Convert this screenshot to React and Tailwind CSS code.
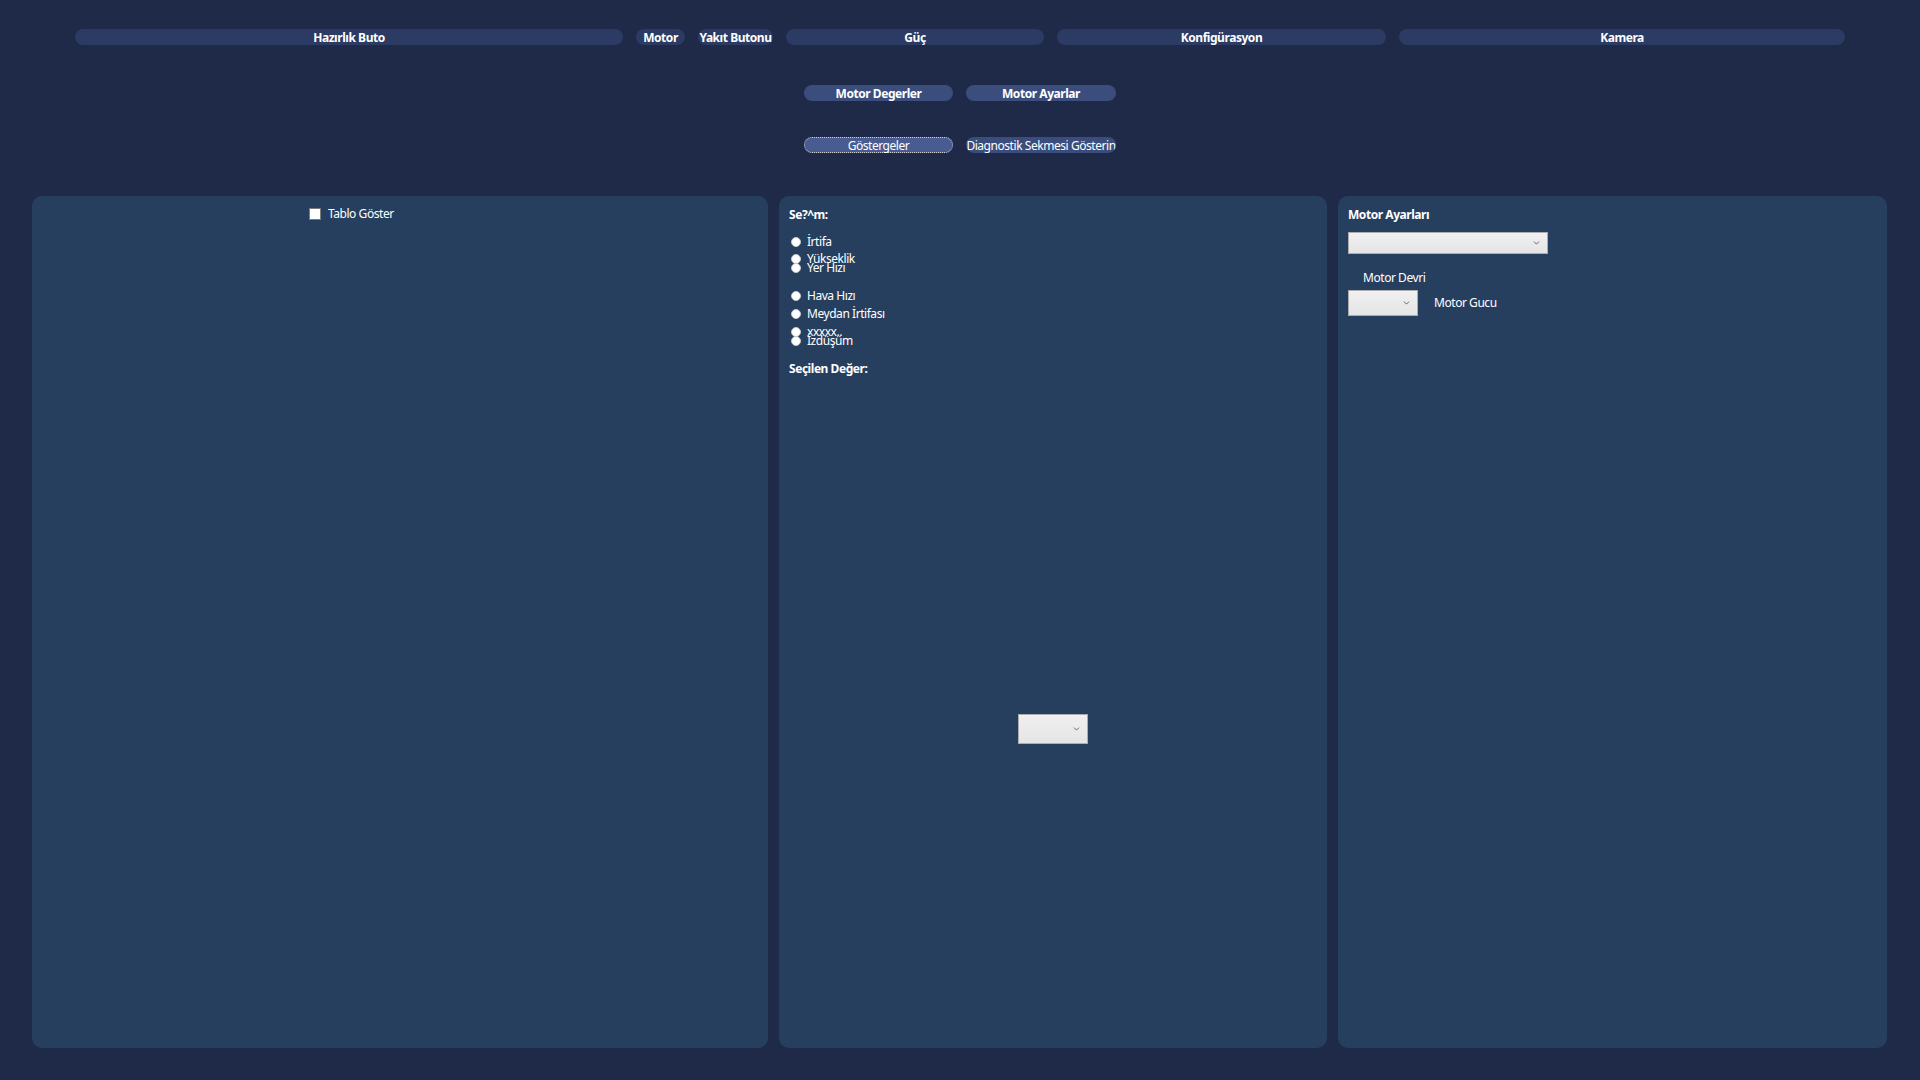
import { ChevronDown } from 'lucide-react';

const font = { fontFamily: '"Segoe UI", "Noto Sans", "Open Sans", sans-serif' };

function TopButton({ label, width }) {
  return (
    <button className={`h-4 rounded-full bg-[#2b3b63] text-white text-[12px] font-bold leading-[17px] whitespace-nowrap ${width}`}>
      {label}
    </button>
  );
}

function Select({ className }) {
  return (
    <div className={`relative border border-[#acacac] bg-gradient-to-b from-[#f0f0f0] to-[#e5e5e5] ${className}`}>
      <ChevronDown size={9} strokeWidth={2.5} className="absolute right-[6px] top-1/2 -translate-y-1/2 text-[#606060]" />
    </div>
  );
}

function Radio({ label, className = '' }) {
  return (
    <div className={`flex h-4 items-center gap-[6px] ${className}`}>
      <span className="h-[10px] w-[10px] rounded-full bg-white border border-[#c8c8c8]" />
      <span className="text-[12px] leading-4 text-white">{label}</span>
    </div>
  );
}

export default function App() {
  return (
    <div className="h-[1080px] w-[1920px] bg-[#1f2a48] overflow-hidden tracking-[-0.45px]" style={font}>
      {/* fila superior */}
      <div className="flex gap-[13px] pt-[29px] pl-[75px]">
        <TopButton label="Hazırlık Buto" width="w-[548px]" />
        <TopButton label="Motor" width="w-[49px]" />
        <TopButton label="Yakıt Butonu" width="w-[75px]" />
        <TopButton label="Güç" width="w-[258px]" />
        <TopButton label="Konfigürasyon" width="w-[329px]" />
        <TopButton label="Kamera" width="w-[446px]" />
      </div>

      <div className="flex gap-[13px] pt-[40px] pl-[804px]">
        <button className="h-4 w-[149px] rounded-full bg-[#3a4d7c] text-white text-[12px] font-bold leading-[17px]">Motor Degerler</button>
        <button className="h-4 w-[150px] rounded-full bg-[#3a4d7c] text-white text-[12px] font-bold leading-[17px]">Motor Ayarlar</button>
      </div>

      <div className="flex gap-[13px] pt-[36px] pl-[804px]">
        <button className="h-4 w-[149px] rounded-full bg-[#485c92] border border-dotted border-[#d0d0d0] text-white text-[12px] leading-[15px]">Göstergeler</button>
        <button className="h-4 w-[150px] rounded-full bg-[#3a4d7c] text-white text-[12px] leading-[17px] whitespace-nowrap overflow-hidden">Diagnostik Sekmesi Gösterin</button>
      </div>

      {/* paneles */}
      <div className="flex gap-[11px] pt-[43px] pl-[32px]">
        <div className="h-[852px] w-[736px] rounded-[10px] bg-[#273f5f] pt-[10px] pl-[277px]">
          <label className="flex items-center gap-[7px] text-[12px] leading-4 text-white">
            <span className="h-3 w-3 bg-white border border-[#7a7a7a]" />
            Tablo Göster
          </label>
        </div>

        <div className="h-[852px] w-[548px] rounded-[10px] bg-[#273f5f] pt-[11px] pl-[10px]">
          <div className="text-[12px] font-bold leading-4 text-white">Se?^m:</div>
          <Radio label="İrtifa" className="mt-[11px] pl-[2px]" />
          <Radio label="Yükseklik" className="mt-[1px] pl-[2px]" />
          <Radio label="Yer Hızı" className="-mt-[7px] pl-[2px]" />
          <Radio label="Hava Hızı" className="mt-[12px] pl-[2px]" />
          <Radio label="Meydan İrtifası" className="mt-[2px] pl-[2px]" />
          <Radio label="xxxxx.." className="mt-[2px] pl-[2px]" />
          <Radio label="İzdüşüm" className="-mt-[7px] pl-[2px]" />
          <div className="mt-[12px] text-[12px] font-bold leading-4 text-white">Seçilen Değer:</div>
          <div className="flex justify-center pr-[10px] pt-[337px]">
            <Select className="h-[30px] w-[70px]" />
          </div>
        </div>

        <div className="h-[852px] w-[549px] rounded-[10px] bg-[#273f5f] pt-[11px] pl-[10px]">
          <div className="text-[12px] font-bold leading-4 text-white">Motor Ayarları</div>
          <Select className="mt-[9px] h-[22px] w-[200px]" />
          <div className="mt-4 pl-[15px] text-[12px] leading-4 text-white">Motor Devri</div>
          <div className="mt-1 flex items-center gap-4">
            <Select className="h-[26px] w-[70px]" />
            <span className="text-[12px] leading-4 text-white">Motor Gucu</span>
          </div>
        </div>
      </div>
    </div>
  );
}
